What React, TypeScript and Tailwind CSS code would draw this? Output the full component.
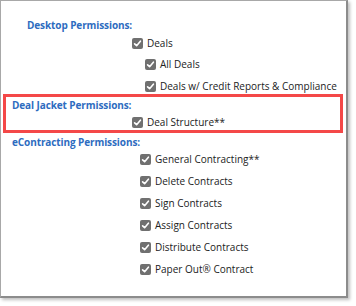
import React from 'react'

function Check({ label, indent }: { label: string; indent: string }) {
  return (
    <div className={`flex h-[16px] items-center gap-[4px] ${indent}`}>
      <span className="flex h-[11px] w-[11px] shrink-0 items-center justify-center rounded-[2px] bg-[#707070]">
        <svg width="9" height="9" viewBox="0 0 9 9" fill="none">
          <path d="M1.6 4.8 L3.6 6.7 L7.4 2.2" stroke="white" strokeWidth="1.6" strokeLinecap="round" strokeLinejoin="round" />
        </svg>
      </span>
      <span className="whitespace-nowrap text-[10px] text-[#222]">{label}</span>
    </div>
  )
}

function Heading({ children, indent }: { children: React.ReactNode; indent: string }) {
  return (
    <div className={`flex h-[16px] items-center text-[10px] font-bold tracking-[-0.1px] text-[#2d6cc0] ${indent}`}>
      {children}
    </div>
  )
}

export default function App() {
  const contracts = [
    'General Contracting**',
    'Delete Contracts',
    'Sign Contracts',
    'Assign Contracts',
    'Distribute Contracts',
    'Paper Out® Contract',
  ]

  return (
    <div className="h-[306px] w-[356px] bg-white font-['Open_Sans',sans-serif]">
      <div className="flex h-[298px] w-[348px] flex-col border-b-2 border-l border-r-2 border-t border-b-[#8c8c8c] border-l-[#a8a8a8] border-r-[#8c8c8c] border-t-[#a8a8a8] bg-white shadow-[2px_2px_3px_rgba(0,0,0,0.25)]">
        <div className="mt-[16px]">
          <Heading indent="pl-[26px]">Desktop Permissions:</Heading>
        </div>
        <div className="mt-[2px]">
          <Check label="Deals" indent="pl-[131px]" />
        </div>
        <div className="mt-[5px]">
          <Check label="All Deals" indent="pl-[144px]" />
        </div>
        <div className="mt-[6px]">
          <Check label="Deals w/ Credit Reports & Compliance" indent="pl-[144px]" />
        </div>

        {/* highlighted section */}
        <div className="ml-[2px] w-[340px] border-[3px] border-[#f44848]">
          <Heading indent="pl-[6px]">Deal Jacket Permissions:</Heading>
          <div className="mt-[1px]">
            <Check label="Deal Structure**" indent="pl-[126px]" />
          </div>
        </div>

        <div className="mt-[1px]">
          <Heading indent="pl-[11px]">eContracting Permissions:</Heading>
        </div>
        <div className="mt-[1px] flex flex-col gap-[6px]">
          {contracts.map((c) => (
            <Check key={c} label={c} indent="pl-[139px]" />
          ))}
        </div>
      </div>
    </div>
  )
}
